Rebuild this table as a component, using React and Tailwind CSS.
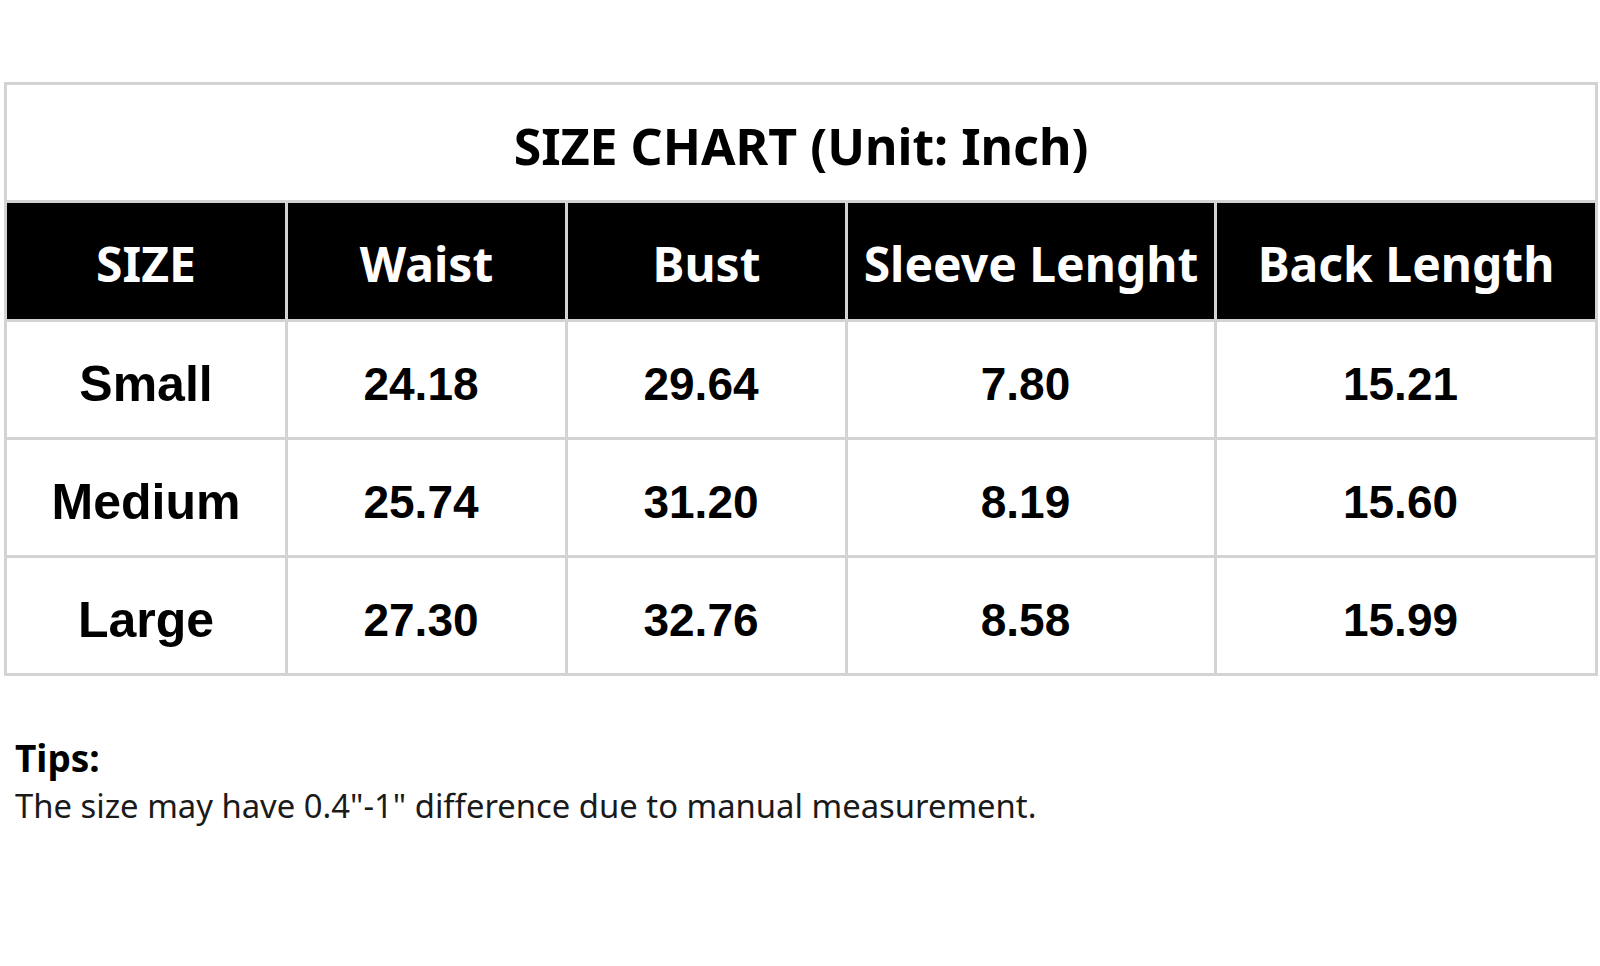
export default function App() {
  const headers = ["SIZE", "Waist", "Bust", "Sleeve Lenght", "Back Length"];
  const rows = [
    ["Small", "24.18", "29.64", "7.80", "15.21"],
    ["Medium", "25.74", "31.20", "8.19", "15.60"],
    ["Large", "27.30", "32.76", "8.58", "15.99"],
  ];

  return (
    <div className="min-h-screen bg-white pt-[82px] text-black">
      <table className="ml-[4px] w-[1591px] table-fixed border-collapse border-[3px] border-[#d3d3d3]">
        <colgroup>
          <col className="w-[281px]" />
          <col className="w-[280px]" />
          <col className="w-[280px]" />
          <col className="w-[369px]" />
          <col className="w-[381px]" />
        </colgroup>
        <tbody>
          <tr>
            <td
              colSpan={5}
              className="h-[118px] border-[3px] border-[#d3d3d3] pt-[8px] text-center font-['Noto_Sans',sans-serif] text-[50px] font-bold"
            >
              SIZE CHART (Unit: Inch)
            </td>
          </tr>
          <tr>
            {headers.map((h) => (
              <td
                key={h}
                className="h-[119px] border-[3px] border-[#d3d3d3] bg-black pt-[6px] text-center font-['Noto_Sans',sans-serif] text-[48px] font-bold text-white"
              >
                {h}
              </td>
            ))}
          </tr>
          {rows.map((r) => (
            <tr key={r[0]}>
              {r.map((c, i) => (
                <td
                  key={i}
                  className={
                    "h-[118px] border-[3px] border-[#d3d3d3] pt-[10px] text-center font-['Liberation_Sans',Arial,sans-serif] font-bold " +
                    (i === 0 ? "text-[50px]" : "pr-[11px] text-[46px]")
                  }
                >
                  {c}
                </td>
              ))}
            </tr>
          ))}
        </tbody>
      </table>

      <div className="mt-[58px] pl-[15px] font-['Noto_Sans',sans-serif] text-[#1a1a1a]">
        <p className="text-[37px] font-bold leading-[48px] text-black">Tips:</p>
        <p className="text-[32.8px] leading-[48px]">
          The size may have 0.4"-1" difference due to manual measurement.
        </p>
      </div>
    </div>
  );
}
